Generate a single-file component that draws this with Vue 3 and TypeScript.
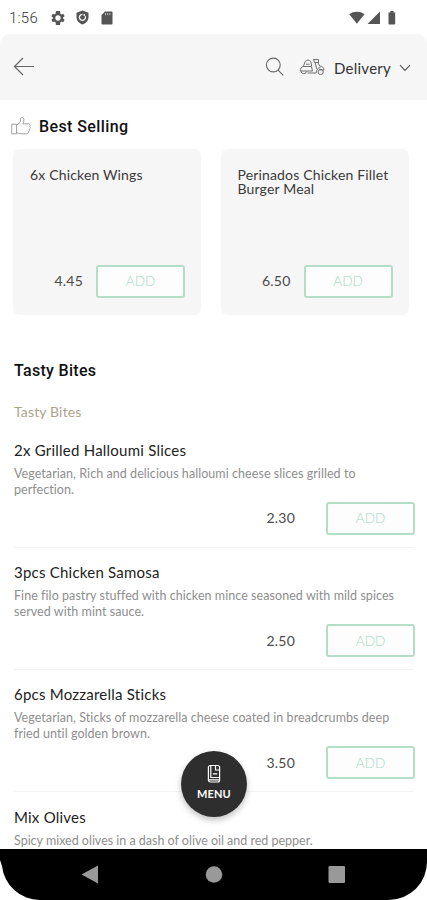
<script setup lang="ts">
interface Item {
  name: string
  lines: string[]
  price: string
  tight?: boolean
}

const best: { lines: string[]; price: string }[] = [
  { lines: ['6x Chicken Wings'], price: '4.45' },
  { lines: ['Perinados Chicken Fillet', 'Burger Meal'], price: '6.50' },
]

const items: Item[] = [
  {
    name: '2x Grilled Halloumi Slices',
    lines: ['Vegetarian, Rich and delicious halloumi cheese slices grilled to', 'perfection.'],
    price: '2.30',
  },
  {
    name: '3pcs Chicken Samosa',
    lines: ['Fine filo pastry stuffed with chicken mince seasoned with mild spices', 'served with mint sauce.'],
    price: '2.50',
  },
  {
    name: '6pcs Mozzarella Sticks',
    lines: ['Vegetarian, Sticks of mozzarella cheese coated in breadcrumbs deep', 'fried until golden brown.'],
    price: '3.50',
  },
  {
    name: 'Mix Olives',
    lines: ['Spicy mixed olives in a dash of olive oil and red pepper.'],
    price: '',
    tight: true,
  },
]
</script>

<template>
  <div class="screen">
    <div class="status">
      <span class="clock">1:56</span>
      <svg width="14" height="14" viewBox="2 2 20 20">
        <path fill="#555" fill-rule="evenodd" d="M19.4 13a7.500 7.500 0 0 0 0-2l2.100-1.600-2-3.500-2.500 1a7.500 7.500 0 0 0-1.700-1L15 2H9l-.4 3.900a7.500 7.500 0 0 0-1.700 1l-2.400-1-2 3.500L4.600 11a7.500 7.500 0 0 0 0 2l-2.100 1.600 2 3.500 2.400-1a7.500 7.500 0 0 0 1.700 1L9 22h6l.3-3.900a7.500 7.500 0 0 0 1.700-1l2.500 1 2-3.500zM12 15.800a3.800 3.800 0 1 1 0-7.600 3.800 3.800 0 0 1 0 7.600z" />
      </svg>
      <svg class="shield" width="13" height="15" viewBox="0 0 13 15">
        <path fill="#555" d="M6.500 .5 12.500 2.800V7c0 3.600-2.500 6.300-6 7.500C3 13.300.5 10.600.5 7V2.800z" />
        <path fill="none" stroke="#fff" stroke-width="1.300" d="M9.300 6.300A3 3 0 1 1 6.500 4.300" />
        <circle cx="8.300" cy="5" r=".9" fill="#fff" />
      </svg>
      <svg class="sd" width="12" height="14" viewBox="0 0 12 14">
        <path fill="#555" d="M4 .5h6.500a1 1 0 0 1 1 1v11a1 1 0 0 1-1 1h-9a1 1 0 0 1-1-1V4z" />
        <path stroke="#bbb" stroke-width="1" d="M4.500 2v2.200M6.700 2v2.200M8.900 2v2.200" />
      </svg>
      <span class="grow" />
      <svg width="48" height="16" viewBox="0 0 48 16">
        <path fill="#555" d="M.3 4.200C4.500.9 11 .9 15.500 4.200L7.900 13.700z" />
        <path fill="#555" d="M31 1.500V14H18.500z" />
        <path fill="#555" d="M39.500 2.500h1.800V1h3.200v1.500h1.700v11a1 1 0 0 1-1 1h-4.700a1 1 0 0 1-1-1z" />
      </svg>
    </div>

    <header class="bar">
      <svg width="22" height="20" viewBox="0 0 22 20" fill="none" stroke="#666" stroke-width="1.200">
        <path d="M21 9.500H1.500M10 1 1.500 9.500 10 18" />
      </svg>
      <span class="grow" />
      <svg width="20" height="20" viewBox="0 0 20 20" fill="none" stroke="#666" stroke-width="1.100">
        <circle cx="8.300" cy="8" r="6.900" />
        <path d="M13.100 13.200 18.300 18.300" />
      </svg>
      <svg class="scooter" width="26" height="18" viewBox="0 0 26 18" fill="none" stroke="#707070" stroke-width="1">
        <path d="M4.300 8.500 6 4c1-2.500 5-2.500 6 0l.7 4.500M7 6.200h3.500M4.300 8.500h8.200l1 4.500H1.200C1.500 10.500 2.500 8.800 4.300 8.500zM8.500 15H17c.5-3.500 2-5.300 4.500-5.300" />
        <path d="M14.500 1.500h5v3h-4zM16.200 4.500l1.500 6.500M19 4.500l1.600 3.500c2.500 0 4.300 1.500 4.400 4h-4.500" />
        <path d="M2.200 13.200a2.600 2.600 0 0 0 5.200 0" />
        <circle cx="21.700" cy="14" r="2.600" />
      </svg>
      <span class="mode">Delivery</span>
      <svg class="chevron" width="12" height="8" viewBox="0 0 12 8" fill="none" stroke="#555" stroke-width="1.100">
        <path d="M1 1.200 6 6.500l5-5.300" />
      </svg>
    </header>

    <main>
      <div class="best-title">
        <svg width="20" height="19" viewBox="0 0 19 19" preserveAspectRatio="none" fill="none" stroke="#999" stroke-width=".9">
          <path d="M.7 7.200h4.500v9.600H.7zM5.200 8.500l3.600-3.400.3-3.600c.2-1.500 2.800-1.300 3.100.7.200 1.400-.1 3-.8 4.700h5.300c1.700.2 1.900 1.800 1 2.600 1 .8.900 2-.1 2.500.5 1-.1 2.200-1 2.500.2 1.400-.5 2.300-2 2.300H9.300c-1.500 0-2.400-.7-4.100-1.200" />
        </svg>
        <h2>Best Selling</h2>
      </div>
      <div class="cards">
        <article v-for="b in best" :key="b.price" class="card">
          <h3><span v-for="l in b.lines" :key="l">{{ l }}</span></h3>
          <div class="buy">
            <span class="price">{{ b.price }}</span>
            <button class="add">ADD</button>
          </div>
        </article>
      </div>

      <h2 class="section">Tasty Bites</h2>
      <div class="sub">Tasty Bites</div>

      <article v-for="it in items" :key="it.name" class="item" :class="{ tight: it.tight }">
        <h3>{{ it.name }}</h3>
        <p>
          <span v-for="l in it.lines" :key="l">{{ l }}</span>
        </p>
        <div v-if="it.price" class="buy">
          <span class="price">{{ it.price }}</span>
          <button class="add">ADD</button>
        </div>
      </article>
    </main>

    <nav class="nav">
      <svg width="427" height="51" viewBox="0 0 427 51">
        <path fill="#000" d="M0 0h427v13a38 38 0 0 1-38 38H40A38 38 0 0 1 2 17L0 11z" />
        <path fill="#999" d="M81.500 25.500 98 16.500v18z" />
        <circle cx="214" cy="25.500" r="8.300" fill="#999" />
        <rect x="328.500" y="17" width="16.500" height="17" rx="1" fill="#999" />
      </svg>
    </nav>

    <button class="fab">
      <svg width="14" height="20" viewBox="0 0 14 20" fill="none" stroke="#fff" stroke-width="1.200">
        <rect x="1.400" y="1.500" width="11.200" height="16.500" rx="2" />
        <path d="M3.800 2v11.500h8.500M8.500 2v4h4M5.800 9.800h4.500M2 15.800h10" />
      </svg>
      <span>MENU</span>
    </button>
  </div>
</template>

<style>
body { background: #fff; }
</style>

<style scoped>
* { box-sizing: border-box; }
.screen {
  position: relative;
  width: 427px;
  height: 900px;
  overflow: hidden;
  display: flex;
  flex-direction: column;
  background: #fff;
  font-family: Lato, sans-serif;
  color: #333;
}
h2, h3, p { margin: 0; font-weight: 400; }
svg { display: block; flex: none; }
.grow { flex: 1; }
.status {
  height: 34px;
  flex: none;
  display: flex;
  align-items: center;
  padding: 1px 30px 0 9px;
}
.clock { font: 300 15px/20px Roboto, sans-serif; width: 42px; color: #333; letter-spacing: 0.200px; }
.shield { margin-left: 11px; }
.sd { margin-left: 12px; }
.bar {
  height: 66px;
  flex: none;
  display: flex;
  align-items: center;
  padding: 0 16px 0 13px;
  background: #f6f6f6;
  border-radius: 10px 10px 0 0;
}
.scooter { margin-left: 14px; margin-right: 1px; }
.mode {
  width: 57px;
  margin: 1px 8px 0 8px;
  font-size: 15px;
  line-height: 20px;
  white-space: nowrap;
  letter-spacing: 0.250px;
}
.chevron { margin-top: 2px; }
main { flex: 1; min-height: 0; overflow: hidden; }
.best-title {
  display: flex;
  align-items: center;
  height: 48.500px;
  padding: 5px 0 0 11px;
  gap: 8px;
}
h2 { font: 500 16px/20px Roboto, sans-serif; letter-spacing: 0.400px; color: #111; }
.cards { display: flex; gap: 19.500px; padding: 0 13px; }
.card {
  width: 188px;
  height: 166px;
  flex: none;
  display: flex;
  flex-direction: column;
  justify-content: space-between;
  padding: 19px 16px 17px 17px;
  background: #f6f6f6;
  border-radius: 7px;
}
.card h3 { font-size: 14px; line-height: 14px; letter-spacing: 0.160px; color: #3a3a3a; }
.card h3 span, p span { display: block; white-space: nowrap; }
.buy { display: flex; justify-content: flex-end; align-items: center; }
.price { font-size: 14px; line-height: 18px; letter-spacing: 0.200px; color: #4a4a4a; }
.add {
  width: 89px;
  height: 33px;
  margin-left: 13px;
  padding: 0;
  border: 2px solid #b5dec8;
  border-radius: 3px;
  background: #fdfdfd;
  font: 300 13.500px/18px Lato, sans-serif;
  color: #a5d9bf;
}
.section { margin-top: 46.500px; padding-left: 14px; letter-spacing: 0.300px; }
.sub { margin-top: 21px; padding-left: 14px; font-size: 14px; line-height: 20px; letter-spacing: 0.150px; color: #ada28e; }
.item {
  height: 122.300px;
  margin: 0 13px 0 14px;
  border-bottom: 1px solid #f3f3f3;
  padding-top: 14.500px;
}
.sub + .item { height: 125.500px; padding-top: 17.700px; }
.item h3 { font-size: 15px; line-height: 20px; letter-spacing: 0.230px; color: #222; }
.item p { height: 32px; margin-top: 6px; font-size: 12.500px; line-height: 16px; letter-spacing: 0.060px; color: #8e8e8e; }
.tight p { letter-spacing: -0.010px; }
.item .buy { margin: 4px -1px 0 0; }
.item .add { margin-left: 31px; }
.nav { height: 51px; flex: none; }
.fab {
  position: absolute;
  left: 181px;
  top: 751px;
  width: 66px;
  height: 66px;
  padding: 13px 0 0;
  border: 0;
  border-radius: 50%;
  display: flex;
  flex-direction: column;
  align-items: center;
  background: #2e2e2e;
  box-shadow: 0 3px 6px rgba(0, 0, 0, 0.250);
  color: #fff;
}
.fab span { margin-top: 3px; font: 700 11px/14px Lato, sans-serif; letter-spacing: 0.100px; }
</style>
